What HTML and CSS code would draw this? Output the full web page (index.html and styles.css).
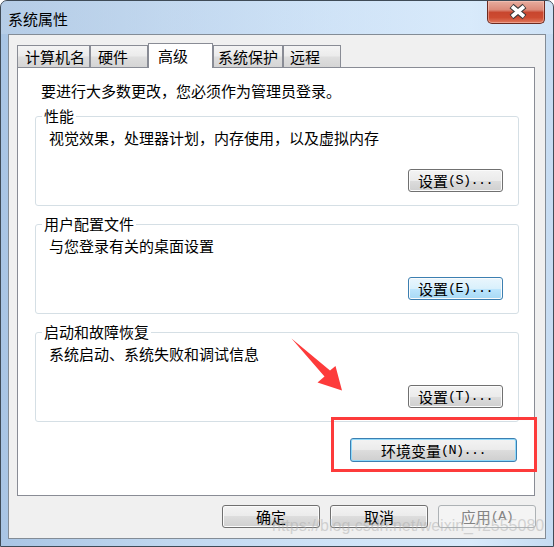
FILE: index.html
```html
<!DOCTYPE html>
<html lang="zh-CN">
<head>
<meta charset="utf-8">
<title>系统属性</title>
<link rel="stylesheet" href="styles.css">
</head>
<body>
<div class="page">
  <div class="window">
    <div class="titlebar">
      <span class="title">系统属性</span>
      <button class="close" aria-label="关闭">
        <svg width="58" height="23" viewBox="0 0 58 23">
          <path d="M24.5 6 L37.5 17 M37.5 6 L24.5 17" stroke="#3a3a3a" stroke-width="6" fill="none"/>
          <path d="M25 6.5 L37 16.5 M37 6.5 L25 16.5" stroke="#ffffff" stroke-width="3.6" fill="none"/>
        </svg>
      </button>
    </div>
    <div class="client">
      <div class="tabs">
        <div class="tab t1">计算机名</div>
        <div class="tab t2">硬件</div>
        <div class="tab t3 active">高级</div>
        <div class="tab t4">系统保护</div>
        <div class="tab t5">远程</div>
      </div>
      <div class="panel">
        <p class="note">要进行大多数更改，您必须作为管理员登录。</p>
        <div class="group">
          <span class="group-title">性能</span>
          <p class="desc">视觉效果，处理器计划，内存使用，以及虚拟内存</p>
          <button class="btn group-btn">设置<span class="m">(S)...</span></button>
        </div>
        <div class="group">
          <span class="group-title">用户配置文件</span>
          <p class="desc">与您登录有关的桌面设置</p>
          <button class="btn group-btn hover">设置<span class="m">(E)...</span></button>
        </div>
        <div class="group">
          <span class="group-title">启动和故障恢复</span>
          <p class="desc">系统启动、系统失败和调试信息</p>
          <button class="btn group-btn">设置<span class="m">(T)...</span></button>
        </div>
        <button class="btn default env">环境变量<span class="m">(N)...</span></button>
      </div>
      <div class="actions">
        <button class="btn">确定</button>
        <button class="btn">取消</button>
        <button class="btn disabled">应用<span class="m">(A)</span></button>
      </div>
    </div>
  </div>
  <div class="annot-box"></div>
  <svg class="annot-arrow" width="554" height="547" viewBox="0 0 554 547">
    <polygon points="291.5,338.5 330,370.5 335.5,366 342,390.5 317.5,382.5 324.5,376.5" fill="#fd3b3b"/>
  </svg>
  <div class="watermark">https://blog.csdn.net/weixin_42555080</div>
</div>
</body>
</html>
```
FILE: styles.css
```css
body {
  margin: 0;
  background: #ffffff;
  font-family: "Noto Sans CJK SC", sans-serif;
  font-size: 15px;
  color: #000;
}

.page {
  position: relative;
  width: 554px;
  height: 547px;
}

.window {
  box-sizing: border-box;
  width: 554px;
  height: 547px;
  border: 1px solid #3f4b57;
  border-radius: 7px 7px 0 0;
  background: linear-gradient(to right, #a9c5e4 0%, #c0d7ef 30%, #cfe3f7 60%, #d8eafb 85%, #c6dcf2 100%);
  display: flex;
  flex-direction: column;
  overflow: hidden;
}

.titlebar {
  box-sizing: border-box;
  height: 33px;
  display: flex;
  align-items: flex-start;
  padding: 0 8px 0 7px;
  background: linear-gradient(to right, rgba(190,210,232,0.6), rgba(205,225,246,0.3) 50%, rgba(220,236,252,0.4));
}

.title {
  margin-top: 9px;
  line-height: 18px;
}

.close {
  margin-left: auto;
  box-sizing: border-box;
  width: 58px;
  height: 23px;
  padding: 0;
  border: 1px solid #6b2a20;
  border-top: none;
  border-radius: 0 0 5px 5px;
  background: linear-gradient(#e7ad9f 0%, #dc8a79 40%, #c8462e 52%, #cd4b31 75%, #e0785d 100%);
  box-shadow: inset 0 0 0 1px rgba(255, 210, 200, 0.45);
  display: block;
}

.close svg {
  display: block;
  margin: -1px 0 0 -1px;
}

.client {
  flex: 1;
  margin: 0 7px 7px 7px;
  border: 1px solid #838c96;
  background: #f0f0f0;
  padding: 8px 9px 10px 8px;
  display: flex;
  flex-direction: column;
}

.tabs {
  display: flex;
  align-items: flex-end;
  height: 24px;
}

.tab {
  box-sizing: border-box;
  height: 22px;
  border: 1px solid #898c95;
  border-bottom: none;
  background: linear-gradient(#f4f4f4, #ececec 45%, #dedede 55%, #d5d5d5);
  line-height: 21px;
  white-space: nowrap;
}

.t1 { width: 73px; padding-left: 7px; }
.t2 { width: 58px; padding-left: 7px; }
.t3 { width: 65px; padding-left: 9px; }
.t4 { width: 70px; padding-left: 4px; }
.t5 { width: 58px; padding-left: 6px; }

.tab.active {
  height: 25px;
  margin-bottom: -1px;
  background: #ffffff;
  line-height: 23px;
  position: relative;
  z-index: 1;
}

.panel {
  margin-right: 1px;
  border: 1px solid #898c95;
  background: #ffffff;
  padding: 14px 15px 33px 17px;
  display: flex;
  flex-direction: column;
}

.note {
  margin: 0 0 0 6px;
  line-height: 18px;
}

.group {
  margin-top: 16px;
  border: 1px solid #d5dfe5;
  border-radius: 3px;
  padding: 0 15px 13px 0;
  display: flex;
  flex-direction: column;
}

.group + .group {
  margin-top: 18px;
}

.group-title {
  align-self: flex-start;
  margin: -9px 0 0 6px;
  padding: 0 2px;
  background: #ffffff;
  line-height: 16px;
}

.desc {
  margin: 5px 0 0 13px;
  line-height: 18px;
}

.btn {
  box-sizing: border-box;
  height: 23px;
  padding: 0;
  border: 1px solid #707070;
  border-radius: 3px;
  background: linear-gradient(#f3f3f3, #ebebeb 50%, #dddddd 50%, #cfcfcf);
  box-shadow: inset 0 0 0 1px #fbfbfb;
  font-family: "Noto Sans CJK SC", sans-serif;
  font-size: 15px;
  line-height: 21px;
  color: #000;
  display: flex;
  align-items: center;
  justify-content: center;
  white-space: nowrap;
}

.m {
  font-family: "Liberation Mono", monospace;
  font-size: 13.5px;
  letter-spacing: -0.6px;
}

.group-btn {
  align-self: flex-end;
  margin-top: 22px;
  width: 95px;
}

.btn.hover {
  border-color: #3c7fb1;
  background: linear-gradient(#eaf6fd, #d9f0fc 50%, #bee6fd 50%, #a7d9f5);
}

.btn.default {
  border-color: #3c7fb1;
  box-shadow: inset 0 0 0 1px #8fd9fa;
}

.env {
  align-self: flex-end;
  margin: 16px 2px 0 0;
  width: 167px;
  height: 24px;
}

.actions {
  display: flex;
  justify-content: flex-end;
  gap: 10px;
  margin-top: 9px;
}

.actions .btn {
  width: 98px;
}

.btn.disabled {
  border-color: #adb2b5;
  background: #f4f4f4;
  box-shadow: none;
  color: #838383;
}

.annot-box {
  position: absolute;
  left: 331px;
  top: 417px;
  width: 206px;
  height: 55px;
  box-sizing: border-box;
  border: 3px solid #fd3b3b;
}

.annot-arrow {
  position: absolute;
  left: 0;
  top: 0;
  pointer-events: none;
}

.watermark {
  position: absolute;
  left: 272px;
  top: 518px;
  font-family: "Liberation Sans", sans-serif;
  font-size: 16px;
  line-height: 16px;
  color: rgba(175, 175, 175, 0.5);
  white-space: nowrap;
  pointer-events: none;
}
```
